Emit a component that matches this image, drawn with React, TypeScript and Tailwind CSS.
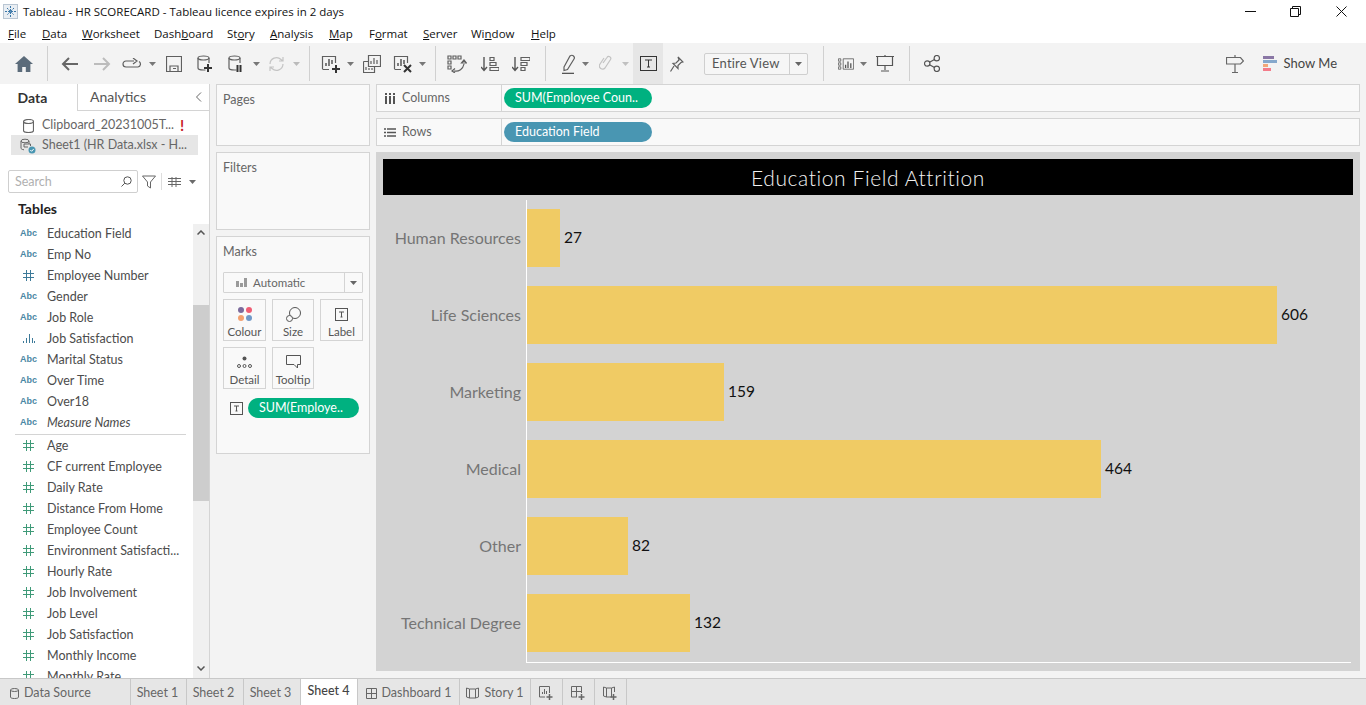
import type { ReactNode } from 'react'

const lato = "font-['Lato','Liberation_Sans',sans-serif]"

// --- small svg helpers ---
function Ico({ w = 20, h = 20, children, className = '' }: { w?: number; h?: number; children: ReactNode; className?: string }) {
  return (
    <svg width={w} height={h} viewBox={`0 0 ${w} ${h}`} fill="none" stroke="#5f5f5f" strokeWidth="1.2" className={className}>
      {children}
    </svg>
  )
}

function Caret({ color = '#6b6b6b' }: { color?: string }) {
  return (
    <svg width="7" height="4" viewBox="0 0 7 4">
      <path d="M0 0h7L3.5 4z" fill={color} />
    </svg>
  )
}

function Slot({ className, children }: { className: string; children?: ReactNode }) {
  return <div className={`flex h-full shrink-0 items-center justify-center ${className}`}>{children}</div>
}

function Sep({ className }: { className: string }) {
  return (
    <Slot className={className}>
      <div className="h-[35px] w-px bg-[#d0d0d0]" />
    </Slot>
  )
}

function TBox({ size = 13 }: { size?: number }) {
  return (
    <svg width={size} height={size} viewBox="0 0 13 13" fill="none">
      <rect x="0.5" y="0.5" width="12" height="12" stroke="#555" />
      <path d="M4 4h5M6.5 4v5M5.5 9h2" stroke="#555" />
    </svg>
  )
}

function Plus({ x, y, c = '#333' }: { x: number; y: number; c?: string }) {
  return <path d={`M${x - 4} ${y}h8M${x} ${y - 4}v8`} stroke={c} strokeWidth="2" />
}

function Cyl({ x = 3, y = 2 }: { x?: number; y?: number }) {
  return (
    <>
      <ellipse cx={x + 5.5} cy={y + 2} rx="5.5" ry="2" />
      <path d={`M${x} ${y + 2}v10c0 1 2 2 5.5 2h2M${x + 11} ${y + 2}v5`} />
    </>
  )
}

function BarsInBox() {
  return (
    <>
      <path d="M1.5 15V2.5h13V9M1.5 15.5H8" />
      <path d="M5 12V9M8 12V5M11 10V6" strokeWidth="1.6" />
    </>
  )
}

function Toolbar() {
  return (
    <div className="flex h-[41px] shrink-0 items-center bg-[#f3f3f3] pl-[8px]">
      <Slot className="w-[32px]">
        <svg width="18" height="16" viewBox="0 0 18 16">
          <path d="M9 0 0 8h2.6v8h4.6v-5h3.6v5h4.6V8H18z" fill="#5b6b7a" />
        </svg>
      </Slot>
      <Sep className="w-[14px]" />
      <Slot className="w-[32px]">
        <Ico w={18} h={16}><path d="M17 8H2M8 2 2 8l6 6" stroke="#666" strokeWidth="2" /></Ico>
      </Slot>
      <Slot className="w-[32px]">
        <Ico w={18} h={16}><path d="M1 8h15M10 2l6 6-6 6" stroke="#bcbcbc" strokeWidth="2" /></Ico>
      </Slot>
      <Slot className="w-[28px]">
        <Ico w={20} h={12}><path d="M12 3H4a3 3 0 0 0 0 6h12a3 3 0 0 0 1-5.5M11 0l4 3-4 3" /></Ico>
      </Slot>
      <Slot className="w-[12px]"><Caret color="#777" /></Slot>
      <Slot className="w-[32px]">
        <Ico w={16} h={16}><path d="M.5.5h15v15H.5zM4 15.5V10h8v5.5M7 12.5h3" /></Ico>
      </Slot>
      <Slot className="w-[30px]">
        <Ico w={16} h={18}><Cyl x={1} y={1} /><Plus x={11} y={13} /></Ico>
      </Slot>
      <Slot className="w-[32px]">
        <Ico w={16} h={18}><Cyl x={1} y={1} /><path d="M9.5 10v7M12.5 10v7" stroke="#333" strokeWidth="2" /></Ico>
      </Slot>
      <Slot className="w-[8px]"><Caret color="#777" /></Slot>
      <Slot className="w-[32px]">
        <Ico w={17} h={16}><path d="M2 8a6.5 6.5 0 0 1 11-4.5L15 5M15 8a6.5 6.5 0 0 1-11 4.5L2 11M15 1v4h-4M2 15v-4h4" stroke="#c4c4c4" /></Ico>
      </Slot>
      <Slot className="w-[8px]"><Caret color="#bbb" /></Slot>
      <Sep className="w-[18px]" />
      <Slot className="w-[26px]">
        <Ico w={20} h={20}><BarsInBox /><Plus x={15} y={15} /></Ico>
      </Slot>
      <Slot className="w-[12px]"><Caret color="#777" /></Slot>
      <Slot className="w-[32px]">
        <Ico w={18} h={18}>
          <path d="M5.5.5h12v11h-12zM8 9V6M11 9V3M14 9V5" />
          <path d="M.5 6.5h5M.5 6.5v11h11v-6M3 15v-3M6 15v-2M9 15v-2" />
        </Ico>
      </Slot>
      <Slot className="w-[30px]">
        <Ico w={20} h={20}><BarsInBox /><path d="M11 11l7 7M18 11l-7 7" stroke="#333" strokeWidth="2" /></Ico>
      </Slot>
      <Slot className="w-[8px]"><Caret color="#777" /></Slot>
      <Sep className="w-[18px]" />
      <Slot className="w-[26px]">
        <Ico w={20} h={18}>
          <path d="M1 1h3v3H1zM6 1h3v3H6zM11 1h3v3h-3zM1 6h3v3H1zM1 11h3v3H1z" />
          <path d="M7 16c5 1 9-2 10-7M17 5l-2.5 3h5zM8 13.5l-3 2.5 3 2" />
        </Ico>
      </Slot>
      <Slot className="w-[40px]">
        <Ico w={18} h={16}>
          <path d="M3 1v13M0 11l3 3.5L6 11" stroke="#555" strokeWidth="1.4" />
          <path d="M9 1.5h4v3H9zM9 6.5h6v3H9zM9 11.5h9v3H9z" />
        </Ico>
      </Slot>
      <Slot className="w-[22px]">
        <Ico w={18} h={16}>
          <path d="M3 1v13M0 11l3 3.5L6 11" stroke="#555" strokeWidth="1.4" />
          <path d="M9 1.5h9v3H9zM9 6.5h6v3H9zM9 11.5h4v3H9z" />
        </Ico>
      </Slot>
      <Sep className="w-[26px]" />
      <Slot className="w-[20px]">
        <Ico w={14} h={20}>
          <path d="M3 13 9 2q2-1.5 3.5 0t.5 3L6.5 15.5 3 16.5z" />
          <path d="M1 19.5h12" stroke="#555" strokeWidth="1.6" />
        </Ico>
      </Slot>
      <Slot className="w-[14px]"><Caret color="#777" /></Slot>
      <Slot className="w-[26px]">
        <Ico w={13} h={17}><path d="M4 8 8 2.5a2 2 0 0 1 3.5 2L6 13a3.2 3.2 0 0 1-5.300-3.5L5 3" stroke="#c2c2c2" /></Ico>
      </Slot>
      <Slot className="w-[15px]"><Caret color="#c0c0c0" /></Slot>
      <Slot className="w-[30px] bg-[#e6e6e6]">
        <svg width="17" height="15" viewBox="0 0 17 15" fill="none">
          <rect x="0.5" y="0.5" width="16" height="14" stroke="#333" />
          <path d="M5 4h7M8.5 4v7M7 11h3" stroke="#333" />
        </svg>
      </Slot>
      <Slot className="w-[28px]">
        <Ico w={14} h={16}><path d="M8 1l5 5-2 .5-3 3 0 3-5-5 3-.5 3-3zM4 10l-3.5 5.5" /></Ico>
      </Slot>
      <div className="ml-[13px] flex h-[22px] w-[104px] shrink-0 items-center rounded-[2px] border border-[#cfcfcf] bg-[#f6f6f6]">
        <span className={`flex-1 pl-[7px] text-[13px] tracking-[0.2px] text-[#555] ${lato}`}>Entire View</span>
        <div className="flex h-full w-[18px] items-center justify-center border-l border-[#cfcfcf]"><Caret color="#666" /></div>
      </div>
      <Sep className="w-[30px]" />
      <Slot className="w-[16px]">
        <svg width="20" height="14" viewBox="0 0 20 14" fill="none" stroke="#555">
          <path d="M.5.5h3v3h-3zM.5 5.5h3v3h-3zM.5 10.5h3v3h-3zM6.5.5h13v13h-13z" />
          <path d="M9.5 12V8M12.5 12V4M16 12V6" strokeWidth="1.6" />
        </svg>
      </Slot>
      <Slot className="w-[18px]"><Caret color="#777" /></Slot>
      <Slot className="w-[26px]">
        <Ico w={18} h={17}><path d="M0 1.5h18M1.5 1.5v9h15v-9M9 10.5V15M5 16h8M9 0v1.5" stroke="#555" /></Ico>
      </Slot>
      <Sep className="w-[22px]" />
      <Slot className="w-[24px]">
        <Ico w={16} h={17}>
          <circle cx="3.2" cy="8.5" r="2.7" stroke="#555" />
          <circle cx="12.8" cy="3.2" r="2.7" stroke="#555" />
          <circle cx="12.8" cy="13.8" r="2.7" stroke="#555" />
          <path d="M5.5 7.2l5-2.8M5.5 9.8l5 2.8" stroke="#555" />
        </Ico>
      </Slot>
      <div className="flex-1" />
      <Slot className="w-[22px]">
        <Ico w={18} h={18}><path d="M9 0v2.5M.5 2.5h14l3 3.5-3 3H.5zM9 9v8M6 17.5h6" stroke="#666" /></Ico>
      </Slot>
      <Slot className="ml-[17px] w-[15px]">
        <div className="flex flex-col gap-px">
          <div className="h-[3px] w-[11px] bg-[#8a77a5]" />
          <div className="h-[3px] w-[14px] bg-[#86a8cc]" />
          <div className="h-[3px] w-[5px] bg-[#f2a779]" />
          <div className="h-[3px] w-[8px] bg-[#f47c8a]" />
        </div>
      </Slot>
      <span className={`ml-[6px] mr-[29px] text-[13px] text-[#444] ${lato}`}>Show Me</span>
    </div>
  )
}

const menus: [string, string, string, string][] = [
  ['', 'F', 'ile', 'w-[34px]'],
  ['', 'D', 'ata', 'w-[40px]'],
  ['', 'W', 'orksheet', 'w-[72px]'],
  ['Dash', 'b', 'oard', 'w-[73px]'],
  ['St', 'o', 'ry', 'w-[43px]'],
  ['', 'A', 'nalysis', 'w-[59px]'],
  ['', 'M', 'ap', 'w-[40px]'],
  ['F', 'o', 'rmat', 'w-[54px]'],
  ['', 'S', 'erver', 'w-[48px]'],
  ['Wi', 'n', 'dow', 'w-[60px]'],
  ['', 'H', 'elp', 'w-[40px]'],
]

type Field = { n: string; t: 'abc' | 'hash' | 'hashb' | 'bin'; i?: boolean }

const dims: Field[] = [
  { n: 'Education Field', t: 'abc' },
  { n: 'Emp No', t: 'abc' },
  { n: 'Employee Number', t: 'hashb' },
  { n: 'Gender', t: 'abc' },
  { n: 'Job Role', t: 'abc' },
  { n: 'Job Satisfaction', t: 'bin' },
  { n: 'Marital Status', t: 'abc' },
  { n: 'Over Time', t: 'abc' },
  { n: 'Over18', t: 'abc' },
  { n: 'Measure Names', t: 'abc', i: true },
]

const measures = [
  'Age',
  'CF current Employee',
  'Daily Rate',
  'Distance From Home',
  'Employee Count',
  'Environment Satisfacti...',
  'Hourly Rate',
  'Job Involvement',
  'Job Level',
  'Job Satisfaction',
  'Monthly Income',
  'Monthly Rate',
]

function Hash({ c }: { c: string }) {
  return (
    <svg width="11" height="11" viewBox="0 0 11 11" stroke={c} fill="none">
      <path d="M3.5 0v11M7.5 0v11M0 3.5h11M0 7.5h11" />
    </svg>
  )
}

function FieldRow({ f }: { f: Field }) {
  return (
    <div className="flex h-[21px] shrink-0 items-center">
      <div className="flex w-[47px] shrink-0 justify-center pl-[10px]">
        {f.t === 'abc' && <span className="font-['Liberation_Sans',sans-serif] text-[9px] font-bold text-[#4a87a4]">Abc</span>}
        {f.t === 'hashb' && <Hash c="#3d7a99" />}
        {f.t === 'hash' && <Hash c="#3f9a78" />}
        {f.t === 'bin' && (
          <svg width="13" height="9" viewBox="0 0 13 9" stroke="#3d7a99" fill="none">
            <path d="M1.5 9V7M4.5 9V4M7.5 9V0M10.5 9V4M12.5 9V7" />
          </svg>
        )}
      </div>
      <span className={`whitespace-nowrap pt-[1px] text-[12.5px] text-[#4c4c4c] ${lato} ${f.i ? 'italic' : ''}`}>{f.n}</span>
    </div>
  )
}

function Sidebar() {
  return (
    <div className="flex w-[210px] shrink-0 flex-col border-r border-[#d4d4d4] bg-white">
      <div className={`flex h-[27px] shrink-0 text-[14px] ${lato}`}>
        <div className="flex w-[77px] items-center justify-center pb-[1px] pr-[12px] font-bold text-[#333]">Data</div>
        <div className="flex flex-1 items-center border-b border-l border-[#d4d4d4] pb-[1px] pl-[12px] text-[#555]">
          <span className="flex-1">Analytics</span>
          <svg width="7" height="10" viewBox="0 0 7 10" fill="none" stroke="#666" className="mr-[7px]">
            <path d="M6 .5 1.5 5 6 9.5" />
          </svg>
        </div>
      </div>
      <div className={`flex h-[24px] shrink-0 items-center pl-[23px] pt-[5px] text-[12.5px] text-[#666] ${lato}`}>
        <Ico w={11} h={14} className="mr-[8px]">
          <ellipse cx="5.5" cy="2.5" rx="5" ry="2" stroke="#666" />
          <path d="M.5 2.5v9c0 1 2 2 5 2s5-1 5-2v-9" stroke="#666" />
        </Ico>
        Clipboard_20231005T...
        <span className="ml-[6px] text-[15px] font-bold leading-[15px] text-[#c8232c]">!</span>
      </div>
      <div className={`ml-[11px] mr-[11px] flex h-[20px] shrink-0 items-center bg-[#e6e6e6] pl-[9px] pt-[1px] text-[12.5px] text-[#666] ${lato}`}>
        <svg width="16" height="16" viewBox="0 0 16 16" fill="none" stroke="#666" className="mr-[6px]">
          <ellipse cx="5" cy="3" rx="4" ry="1.8" />
          <path d="M1 3v7c0 1 1 1.5 3 1.8M9 3v3M4 6h6.5v2M4 6v3h4" />
          <circle cx="12" cy="12" r="3.5" fill="#4996b2" stroke="none" />
          <path d="M10.3 12l1.3 1.3 2.2-2.4" stroke="#fff" />
        </svg>
        Sheet1 (HR Data.xlsx - H...
      </div>
      <div className="mt-[15px] flex h-[23px] shrink-0 items-center pl-[8px]">
        <div className="flex h-[23px] w-[130px] items-center rounded-[2px] border border-[#cfcfcf] pl-[6px] pr-[5px]">
          <span className={`flex-1 pt-[1px] text-[12.5px] text-[#b0b0b0] ${lato}`}>Search</span>
          <svg width="11" height="11" viewBox="0 0 11 11" fill="none" stroke="#555">
            <circle cx="6.5" cy="4.5" r="3.7" />
            <path d="M3.8 7.2.5 10.5" />
          </svg>
        </div>
        <svg width="14" height="14" viewBox="0 0 14 14" fill="none" stroke="#666" className="ml-[4px]">
          <path d="M.5 1h13L8.5 7v6l-3-2V7z" />
        </svg>
        <div className="ml-[5px] h-[17px] w-px bg-[#ddd]" />
        <svg width="13" height="10" viewBox="0 0 13 10" stroke="#666" className="ml-[6px]">
          <path d="M0 1.5h13M0 4.5h13M0 7.5h13M4 0v10M8 0v10" />
        </svg>
        <div className="ml-[8px]"><Caret /></div>
      </div>
      <div className={`mt-[6px] h-[25px] shrink-0 pl-[18px] pt-[1px] text-[14px] font-bold leading-[18px] text-[#222] ${lato}`}>Tables</div>
      <div className="relative min-h-0 flex-1 overflow-hidden">
        <div className="mt-[-1px] w-[193px]">
          {dims.map((f) => (
            <FieldRow key={f.n} f={f} />
          ))}
          <div className="mx-[15px] mt-[1px] h-px w-[171px] bg-[#d4d4d4]" />
          {measures.map((n) => (
            <FieldRow key={n} f={{ n, t: 'hash' }} />
          ))}
        </div>
        <div className="absolute bottom-0 right-0 top-[-1px] flex w-[16px] flex-col items-center bg-[#f0f0f0]">
          <svg width="8" height="5" viewBox="0 0 8 5" fill="none" stroke="#555" strokeWidth="1.5" className="mt-[7px]">
            <path d="M.5 4.5 4 1l3.5 3.5" />
          </svg>
          <div className="mt-[70px] h-[196px] w-full bg-[#cdcdcd]" />
          <div className="flex-1" />
          <svg width="8" height="5" viewBox="0 0 8 5" fill="none" stroke="#555" strokeWidth="1.5" className="mb-[7px]">
            <path d="M.5.5 4 4 7.5.5" />
          </svg>
        </div>
      </div>
    </div>
  )
}

function Panel({ title, className, children }: { title: string; className: string; children?: ReactNode }) {
  return (
    <div className={`border border-[#d4d4d4] bg-[#f9f9f9] px-[6px] pt-[8px] ${className}`}>
      <div className={`text-[12.5px] leading-[14px] text-[#666] ${lato}`}>{title}</div>
      {children}
    </div>
  )
}

function MarkCard({ label, children }: { label: string; children: ReactNode }) {
  return (
    <div className={`flex h-[42px] flex-col items-center border border-[#d4d4d4] text-[11.5px] text-[#555] ${lato}`}>
      <div className="flex h-[25px] items-center pt-[3px]">{children}</div>
      <span className="leading-[14px]">{label}</span>
    </div>
  )
}

function Shelves() {
  return (
    <div className="flex w-[154px] shrink-0 flex-col gap-[6px]">
      <Panel title="Pages" className="h-[62px]" />
      <Panel title="Filters" className="h-[78px]" />
      <Panel title="Marks" className="h-[218px]">
        <div className="mt-[13px] flex h-[21px] items-center rounded-[1px] border border-[#d4d4d4]">
          <svg width="11" height="9" viewBox="0 0 11 9" className="ml-[12px] mr-[6px]" fill="#9a9a9a">
            <path d="M0 3h3v6H0zM4 5h3v4H4zM8 0h3v9H8z" />
          </svg>
          <span className={`flex-1 text-[11.5px] text-[#666] ${lato}`}>Automatic</span>
          <div className="flex h-full w-[18px] items-center justify-center border-l border-[#d4d4d4]"><Caret color="#666" /></div>
        </div>
        <div className="mt-[6px] grid grid-cols-[43px_42px_43px] gap-x-[6px] gap-y-[6px]">
          <MarkCard label="Colour">
            <svg width="14" height="14" viewBox="0 0 14 14">
              <circle cx="3" cy="3" r="3" fill="#7b6a9c" />
              <circle cx="11" cy="3" r="3" fill="#ef5d74" />
              <circle cx="3" cy="11" r="3" fill="#f3a06f" />
              <circle cx="11" cy="11" r="3" fill="#6f98c8" />
            </svg>
          </MarkCard>
          <MarkCard label="Size">
            <svg width="15" height="15" viewBox="0 0 15 15" fill="none" stroke="#555">
              <circle cx="9" cy="6" r="5.5" />
              <circle cx="3.5" cy="11.5" r="3" fill="#f9f9f9" />
            </svg>
          </MarkCard>
          <MarkCard label="Label"><TBox /></MarkCard>
          <MarkCard label="Detail">
            <svg width="15" height="13" viewBox="0 0 15 13" fill="none" stroke="#555">
              <circle cx="7.5" cy="2.5" r="2" fill="#555" stroke="none" />
              <circle cx="2" cy="10" r="1.5" />
              <circle cx="7.5" cy="10" r="1.5" />
              <circle cx="13" cy="10" r="1.5" />
            </svg>
          </MarkCard>
          <MarkCard label="Tooltip">
            <svg width="15" height="14" viewBox="0 0 15 14" fill="none" stroke="#555">
              <path d="M.5.5h14v9h-3v3.5l-3.5-3.5H.5z" />
            </svg>
          </MarkCard>
        </div>
        <div className="mt-[9px] flex items-center pl-[7px]">
          <TBox />
          <div className={`ml-[5px] flex h-[20px] w-[111px] items-center rounded-full bg-[#00b180] pl-[11px] text-[12.5px] text-white ${lato}`}>SUM(Employe..</div>
        </div>
      </Panel>
    </div>
  )
}

function ShelfRow({ label, icon, pill, color }: { label: string; icon: ReactNode; pill: string; color: string }) {
  return (
    <div className="flex h-[28px] shrink-0 items-center border border-[#d4d4d4] bg-[#f9f9f9]">
      <div className={`flex h-full w-[125px] shrink-0 items-center border-r border-[#d4d4d4] text-[12.5px] text-[#666] ${lato}`}>
        <div className="flex w-[25px] justify-center">{icon}</div>
        {label}
      </div>
      <div className={`ml-[2px] flex h-[20px] w-[148px] items-center rounded-full pl-[11px] text-[12.5px] text-white ${color} ${lato}`}>{pill}</div>
    </div>
  )
}

const rows = [
  { name: 'Human Resources', v: 27 },
  { name: 'Life Sciences', v: 606 },
  { name: 'Marketing', v: 159 },
  { name: 'Medical', v: 464 },
  { name: 'Other', v: 82 },
  { name: 'Technical Degree', v: 132 },
]

function Chart() {
  return (
    <div className={`flex min-h-0 flex-1 flex-col bg-[#d3d3d3] px-[7px] pt-[7px] ${lato}`}>
      <div className="flex h-[36px] shrink-0 items-center justify-center bg-black pt-[1px] text-[21px] font-light tracking-[0.6px] text-[#f2f2f2]">
        Education Field Attrition
      </div>
      <div className="mt-[5px] flex">
        <div className="flex w-[143px] shrink-0 flex-col">
          {rows.map((r) => (
            <div key={r.name} className="flex h-[77px] items-center justify-end pb-[2px] pr-[5px] text-[16px] text-[#757575]">
              {r.name}
            </div>
          ))}
        </div>
        <div className="mr-[2px] flex-1 border-b border-l border-white">
          {rows.map((r) => (
            <div key={r.name} className="h-[77px] pt-[9px]">
              <div className="flex h-[58px] items-center">
                <div className="h-full bg-[#f0cb64]" style={{ width: Math.round(r.v * 1.2376) }} />
                <span className="mb-[2px] ml-[4px] text-[15.5px] leading-[15px] text-[#111]">{r.v}</span>
              </div>
            </div>
          ))}
        </div>
      </div>
    </div>
  )
}

function SheetTab({ children, className = '' }: { children: ReactNode; className?: string }) {
  return (
    <div className={`flex h-full shrink-0 items-center justify-center border-r border-[#c8c8c8] pt-[2px] text-[12.5px] text-[#666] ${lato} ${className}`}>
      {children}
    </div>
  )
}

function Tabs() {
  return (
    <div className="flex h-[27px] shrink-0 border-t border-[#c8c8c8] bg-[#e6e6e6]">
      <SheetTab className="w-[131px] justify-start pl-[10px]">
        <svg width="9" height="11" viewBox="0 0 9 11" fill="none" stroke="#666" className="mr-[5px]">
          <ellipse cx="4.5" cy="2" rx="4" ry="1.5" />
          <path d="M.5 2v7c0 1 1.5 1.5 4 1.5s4-.5 4-1.500V2" />
        </svg>
        Data Source
      </SheetTab>
      <SheetTab className="w-[56px] pr-[2px]">Sheet 1</SheetTab>
      <SheetTab className="w-[57px] pr-[3px]">Sheet 2</SheetTab>
      <SheetTab className="w-[57px] pr-[3px]">Sheet 3</SheetTab>
      <SheetTab className="w-[57px] bg-white !pt-0 pb-[1px] pr-[1px] font-medium !text-[#444]">Sheet 4</SheetTab>
      <SheetTab className="w-[102px]">
        <svg width="11" height="11" viewBox="0 0 11 11" fill="none" stroke="#666" className="mr-[5px]">
          <path d="M.5.5h10v10H.5zM5.5.5v10M.5 5.5h10" />
        </svg>
        Dashboard 1
      </SheetTab>
      <SheetTab className="w-[71px]">
        <svg width="13" height="12" viewBox="0 0 13 12" fill="none" stroke="#666" className="mr-[5px]">
          <path d="M.5 1 3.500 2v9l-3-1zM3.500 2h6v9h-6zM9.500 2l3-1v9l-3 1z" />
        </svg>
        Story 1
      </SheetTab>
      <SheetTab className="w-[32px]">
        <svg width="15" height="15" viewBox="0 0 15 15" fill="none" stroke="#666">
          <path d="M.5.5h10V7M.5.5V11H6M3.5 8V6M5.5 8V3M7.5 8V5" />
          <path d="M10.5 8v6M7.5 11h6" strokeWidth="1.5" />
        </svg>
      </SheetTab>
      <SheetTab className="w-[32px]">
        <svg width="15" height="15" viewBox="0 0 15 15" fill="none" stroke="#666">
          <path d="M.5.5h10V7M.5.5V11H6M5.5.5V11M.5 5.5h10" />
          <path d="M10.5 8v6M7.5 11h6" strokeWidth="1.5" />
        </svg>
      </SheetTab>
      <SheetTab className="w-[32px]">
        <svg width="15" height="15" viewBox="0 0 15 15" fill="none" stroke="#666">
          <path d="M.5 1l3 1v9l-3-1zM3.5 2h5v9h-5zM8.5 2l3-1v5" />
          <path d="M10.5 8v6M7.5 11h6" strokeWidth="1.5" />
        </svg>
      </SheetTab>
    </div>
  )
}

export default function App() {
  return (
    <div className="flex h-[705px] w-[1366px] flex-col overflow-hidden bg-white font-['Open_Sans',sans-serif]">
      {/* title bar */}
      <div className="flex h-[22px] shrink-0 items-center pl-[3px] pt-[1px]">
        <svg width="15" height="15" viewBox="0 0 15 15" stroke="#3a77a8" fill="none">
          <rect x="0.5" y="0.5" width="14" height="14" fill="#e9eef3" stroke="#b9c6d3" />
          <path d="M7.5 2v11M2 7.5h11M4 4l7 7M11 4l-7 7" strokeDasharray="2 1" />
        </svg>
        <span className="ml-[5px] text-[11.5px] text-[#111]">Tableau - HR SCORECARD - Tableau licence expires in 2 days</span>
        <div className="flex-1" />
        <svg width="11" height="11" viewBox="0 0 11 11" stroke="#111" fill="none" className="mr-[34px]"><path d="M0 5.5h11" /></svg>
        <svg width="11" height="11" viewBox="0 0 11 11" stroke="#111" fill="none" className="mr-[35px]">
          <path d="M.5 2.5h8v8h-8zM2.5 2.5v-2h8v8h-2" />
        </svg>
        <svg width="11" height="11" viewBox="0 0 11 11" stroke="#111" fill="none" className="mr-[19px]"><path d="M.5.5l10 10M10.5.5l-10 10" /></svg>
      </div>
      {/* menu bar */}
      <div className="flex h-[21px] shrink-0 items-center pl-[8px] pt-[2px] text-[11.5px] text-[#111]">
        {menus.map(([a, b, c, w]) => (
          <div key={a + b + c} className={`shrink-0 ${w}`}>
            {a}<span className="underline">{b}</span>{c}
          </div>
        ))}
      </div>
      <Toolbar />
      <div className="flex min-h-0 flex-1 bg-[#f3f3f3]">
        <Sidebar />
        <div className="ml-[6px] flex min-w-0 flex-1 gap-[6px] pr-[6px]">
          <Shelves />
          <div className="flex min-w-0 flex-1 flex-col gap-[6px] pb-[7px]">
            <ShelfRow
              label="Columns"
              pill="SUM(Employee Coun.."
              color="bg-[#00b180]"
              icon={
                <svg width="10" height="11" viewBox="0 0 10 11" stroke="#555" strokeWidth="2">
                  <path d="M1 3v8M5 3v8M9 3v8" />
                  <path d="M0 1h2M4 1h2M8 1h2" />
                </svg>
              }
            />
            <ShelfRow
              label="Rows"
              pill="Education Field"
              color="bg-[#4996b2]"
              icon={
                <svg width="12" height="9" viewBox="0 0 12 9" stroke="#555" strokeWidth="1.5">
                  <path d="M0 1h2M3 1h9M0 4.5h2M3 4.5h9M0 8h2M3 8h9" />
                </svg>
              }
            />
            <Chart />
          </div>
        </div>
      </div>
      <Tabs />
    </div>
  )
}
